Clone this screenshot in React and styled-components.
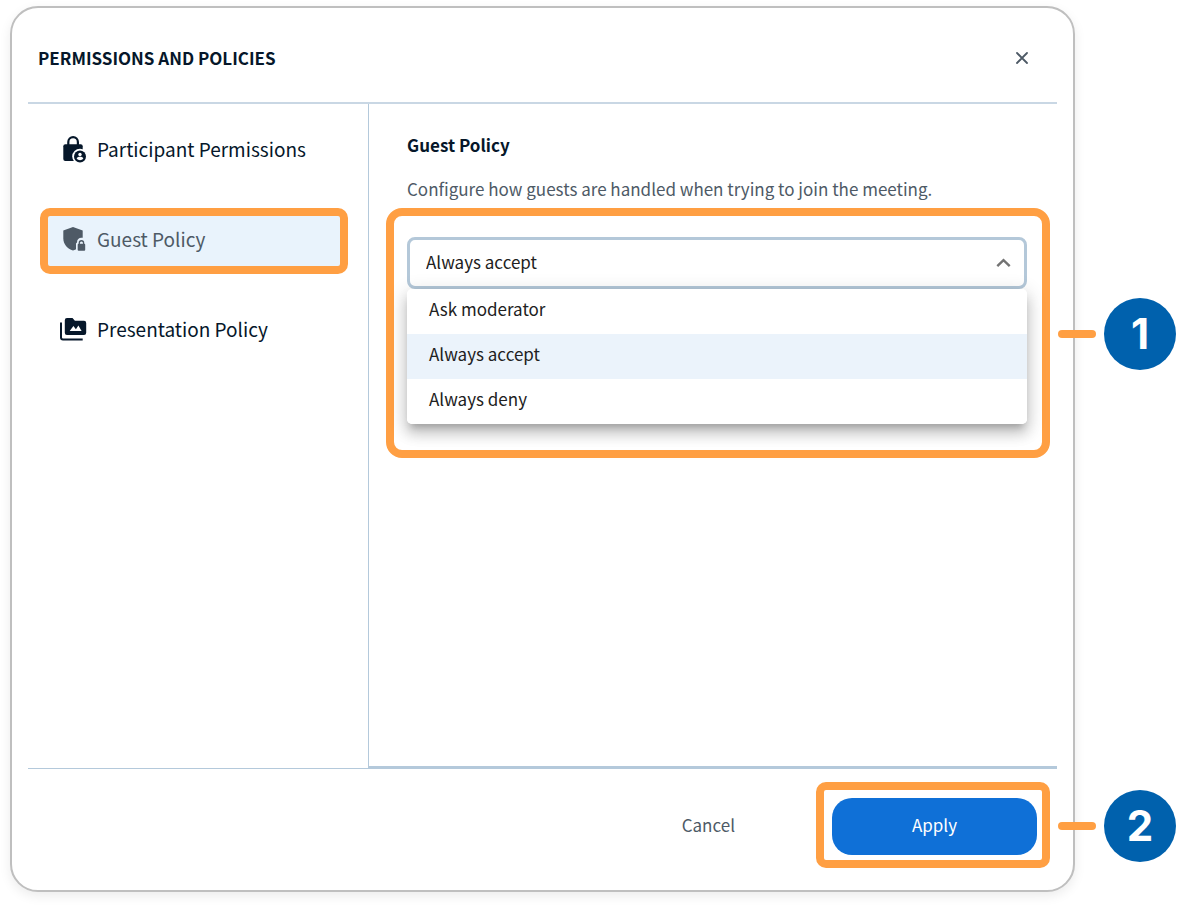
import React, { useState } from "react";
import styled, { createGlobalStyle } from "styled-components";

const GlobalStyle = createGlobalStyle`
  *, *::before, *::after {
    box-sizing: border-box;
  }
  body {
    margin: 0;
    background: #fff;
    color: #06172a;
    font-family: "Noto Sans CJK SC", "Noto Sans", sans-serif;
  }
  button, select {
    font: inherit;
    color: inherit;
    margin: 0;
    padding: 0;
    border: 0;
    background: none;
    cursor: pointer;
  }
`;

const Page = styled.div`
  display: flex;
  min-height: 100vh;
  padding: 6px 120px 15px 10px;
`;

const Modal = styled.section`
  flex: 1;
  display: flex;
  flex-direction: column;
  padding: 0 16px;
  border: 2px solid #bfbfbf;
  border-radius: 28px;
  background: #fff;
  box-shadow: 0 4px 12px rgba(0, 0, 0, 0.08);
`;

const Header = styled.header`
  display: flex;
  align-items: center;
  justify-content: space-between;
  height: 96px;
  padding: 6px 24px 0 10px;
  border-bottom: 2px solid #c9d7e4;
`;

const Title = styled.h1`
  margin: 0;
  font-size: 17px;
  line-height: 24px;
  font-weight: 700;
  text-transform: uppercase;
`;

const CloseButton = styled.button`
  display: flex;
  color: #4e5a66;
`;

const Body = styled.div`
  flex: 1;
  display: flex;
`;

const Sidebar = styled.nav`
  width: 341px;
  display: flex;
  flex-direction: column;
  gap: 24px;
  padding: 14px 20px 0 12px;
  border-right: 1px solid #b4c9db;
`;

const NavItem = styled.button`
  display: flex;
  align-items: center;
  gap: 9px;
  height: 66px;
  padding: 0 12px 4px;
  border: 8px solid ${(p) => (p.$active ? "#ff9f43" : "transparent")};
  border-radius: 10px;
  background: ${(p) => (p.$active ? "#e9f3fc" : "transparent")};
  color: ${(p) => (p.$active ? "#4e5a66" : "#06172a")};
  font-size: 19px;
  line-height: 28px;
  text-align: left;
`;

const Panel = styled.div`
  flex: 1;
  min-width: 0;
  padding: 29px 7px 0 17px;
  border-bottom: 2px solid #b4c9db;
`;

const PanelTitle = styled.h2`
  margin: 0 0 20px 21px;
  font-size: 17px;
  line-height: 24px;
  font-weight: 700;
`;

const PanelText = styled.p`
  margin: 0 0 7px 21px;
  color: #4e5a66;
  font-size: 17px;
  line-height: 24px;
`;

const Highlight = styled.div`
  position: relative;
  border: 8px solid #ff9f43;
  border-radius: ${(p) => p.$radius}px;
  padding: ${(p) => p.$padding};
`;

const SelectField = styled.label`
  display: grid;
  align-items: center;
  color: #737373;

  select,
  svg {
    grid-area: 1 / 1;
  }
  svg {
    justify-self: end;
    margin-right: 16px;
    pointer-events: none;
  }
`;

const Select = styled.select`
  appearance: none;
  width: 100%;
  height: 52px;
  padding: 0 48px 3px 16px;
  border: 3px solid #b4c8d9;
  border-radius: 8px;
  background: #fff;
  color: #212121;
  font-size: 17px;
`;

const Menu = styled.ul`
  position: relative;
  margin: 0;
  padding: 0;
  list-style: none;
  border-radius: 5px;
  background: #fff;
  overflow: hidden;
  box-shadow: 0 7px 7px -4px rgba(0, 0, 0, 0.2),
    0 10px 13px 1px rgba(0, 0, 0, 0.14), 0 4px 18px 3px rgba(0, 0, 0, 0.12);
`;

const Option = styled.li`
  height: 45px;
  padding: 0 22px;
  background: ${(p) => (p.$selected ? "#ebf3fb" : "#fff")};
  color: #212121;
  font-size: 17px;
  line-height: 40px;
  cursor: pointer;
`;

const Footer = styled.footer`
  display: flex;
  align-items: center;
  justify-content: flex-end;
  gap: 81px;
  padding: 13px 7px 22px;
  border-top: 1px solid #b4c9db;
`;

const CancelButton = styled.button`
  color: #4e5a66;
  font-size: 17px;
  line-height: 24px;
`;

const ApplyButton = styled.button`
  display: block;
  width: 205px;
  height: 57px;
  padding-bottom: 4px;
  border-radius: 20px;
  background: #0f70d7;
  color: #fff;
  font-size: 17px;
`;

const CalloutWrap = styled.div`
  position: absolute;
  left: calc(100% + 16px);
  top: 50%;
  transform: translateY(-50%);
  display: flex;
  align-items: center;
  gap: 8px;
  padding-top: 2px;
`;

const CalloutLine = styled.span`
  width: 38px;
  height: 8px;
  border-radius: 4px;
  background: #ff9f43;
`;

const CalloutNumber = styled.span`
  width: 72px;
  height: 72px;
  border-radius: 50%;
  background: #0061ad;
  color: #fff;
  font-family: Inter, sans-serif;
  font-size: 42px;
  font-weight: 700;
  line-height: 72px;
  text-align: center;
`;

const LockPersonIcon = () => (
  <svg width="28" height="28" viewBox="0 0 28 28" aria-hidden="true">
    <mask id="lock-cut">
      <rect width="28" height="28" fill="#fff" />
      <circle cx="20" cy="21.5" r="7.8" fill="#000" />
    </mask>
    <g mask="url(#lock-cut)">
      <rect x="3.3" y="9.2" width="19.4" height="16.8" rx="2" fill="currentColor" />
      <path
        d="M8.3 10V6.9a4.8 4.8 0 0 1 9.6 0V10"
        fill="none"
        stroke="currentColor"
        strokeWidth="2.2"
      />
    </g>
    <circle cx="20" cy="21.5" r="6" fill="currentColor" />
    <circle cx="20" cy="19.5" r="1.7" fill="#fff" />
    <path
      d="M16.7 23.6c0-1.3 1.8-1.9 3.3-1.9s3.3.6 3.3 1.9c-.8 1-2 1.6-3.3 1.6s-2.5-.6-3.3-1.6z"
      fill="#fff"
    />
  </svg>
);

const ShieldLockIcon = () => (
  <svg width="28" height="28" viewBox="0 0 28 28" aria-hidden="true">
    <mask id="shield-cut">
      <rect width="28" height="28" fill="#fff" />
      <path d="M16 28V18.4l1-1c0-3 2-4.6 4.3-4.6H28V28z" fill="#000" />
    </mask>
    <path
      d="M13 2l9.7 3.6v7.6c0 6-4 10.6-9.7 12.2C7.3 23.8 3.3 19.2 3.3 13.2V5.6z"
      fill="currentColor"
      mask="url(#shield-cut)"
    />
    <rect x="17.7" y="18.8" width="7.5" height="6.9" rx=".9" fill="currentColor" />
    <path
      d="M19.3 19.2v-1.3a2.15 2.15 0 0 1 4.3 0v1.3"
      fill="none"
      stroke="currentColor"
      strokeWidth="1.3"
    />
  </svg>
);

const MediaFolderIcon = () => (
  <svg width="28" height="28" viewBox="0 0 28 28" aria-hidden="true">
    <path
      d="M7 3h5.5l2.4 2.7H24a2.2 2.2 0 0 1 2.2 2.2v9.8a2.2 2.2 0 0 1-2.2 2.2H7a2.2 2.2 0 0 1-2.2-2.2V5.2A2.2 2.2 0 0 1 7 3z"
      fill="currentColor"
    />
    <path d="M9.7 16l3.7-4.9 2.5 3.1 2.5-3.8 3.2 5.6z" fill="#fff" />
    <path
      d="M1 7.5v15a2 2 0 0 0 2 2h19.7"
      fill="none"
      stroke="currentColor"
      strokeWidth="2"
    />
  </svg>
);

const CloseIcon = () => (
  <svg width="22" height="22" viewBox="0 0 22 22" aria-hidden="true">
    <path
      d="M6 6l10 10M16 6L6 16"
      stroke="currentColor"
      strokeWidth="1.8"
      strokeLinecap="round"
    />
  </svg>
);

const ChevronUpIcon = () => (
  <svg width="15" height="10" viewBox="0 0 15 10" aria-hidden="true">
    <path d="M1.3 8.2l6.2-6 6.2 6" fill="none" stroke="currentColor" strokeWidth="2.4" />
  </svg>
);

const Callout = ({ number }) => (
  <CalloutWrap>
    <CalloutLine />
    <CalloutNumber>{number}</CalloutNumber>
  </CalloutWrap>
);

const sections = [
  { id: "participants", label: "Participant Permissions", Icon: LockPersonIcon },
  { id: "guest", label: "Guest Policy", Icon: ShieldLockIcon },
  { id: "presentation", label: "Presentation Policy", Icon: MediaFolderIcon },
];

const policies = ["Ask moderator", "Always accept", "Always deny"];

export default function App() {
  const [section, setSection] = useState("guest");
  const [policy, setPolicy] = useState("Always accept");

  return (
    <>
      <GlobalStyle />
      <Page>
        <Modal role="dialog" aria-labelledby="modal-title">
          <Header>
            <Title id="modal-title">Permissions and policies</Title>
            <CloseButton type="button" aria-label="Close">
              <CloseIcon />
            </CloseButton>
          </Header>
          <Body>
            <Sidebar>
              {sections.map(({ id, label, Icon }) => (
                <NavItem
                  key={id}
                  type="button"
                  $active={id === section}
                  onClick={() => setSection(id)}
                >
                  <Icon />
                  {label}
                </NavItem>
              ))}
            </Sidebar>
            <Panel>
              <PanelTitle>Guest Policy</PanelTitle>
              <PanelText>
                Configure how guests are handled when trying to join the meeting.
              </PanelText>
              <Highlight $radius={16} $padding="21px 15px 26px 13px">
                <SelectField>
                  <Select
                    aria-label="Guest Policy"
                    value={policy}
                    onChange={(e) => setPolicy(e.target.value)}
                  >
                    {policies.map((name) => (
                      <option key={name}>{name}</option>
                    ))}
                  </Select>
                  <ChevronUpIcon />
                </SelectField>
                <Menu role="listbox" aria-label="Guest Policy">
                  {policies.map((name) => (
                    <Option
                      key={name}
                      role="option"
                      aria-selected={name === policy}
                      $selected={name === policy}
                      onClick={() => setPolicy(name)}
                    >
                      {name}
                    </Option>
                  ))}
                </Menu>
                <Callout number={1} />
              </Highlight>
            </Panel>
          </Body>
          <Footer>
            <CancelButton type="button">Cancel</CancelButton>
            <Highlight $radius={10} $padding="8px 5px 5px 8px">
              <ApplyButton type="button">Apply</ApplyButton>
              <Callout number={2} />
            </Highlight>
          </Footer>
        </Modal>
      </Page>
    </>
  );
}
